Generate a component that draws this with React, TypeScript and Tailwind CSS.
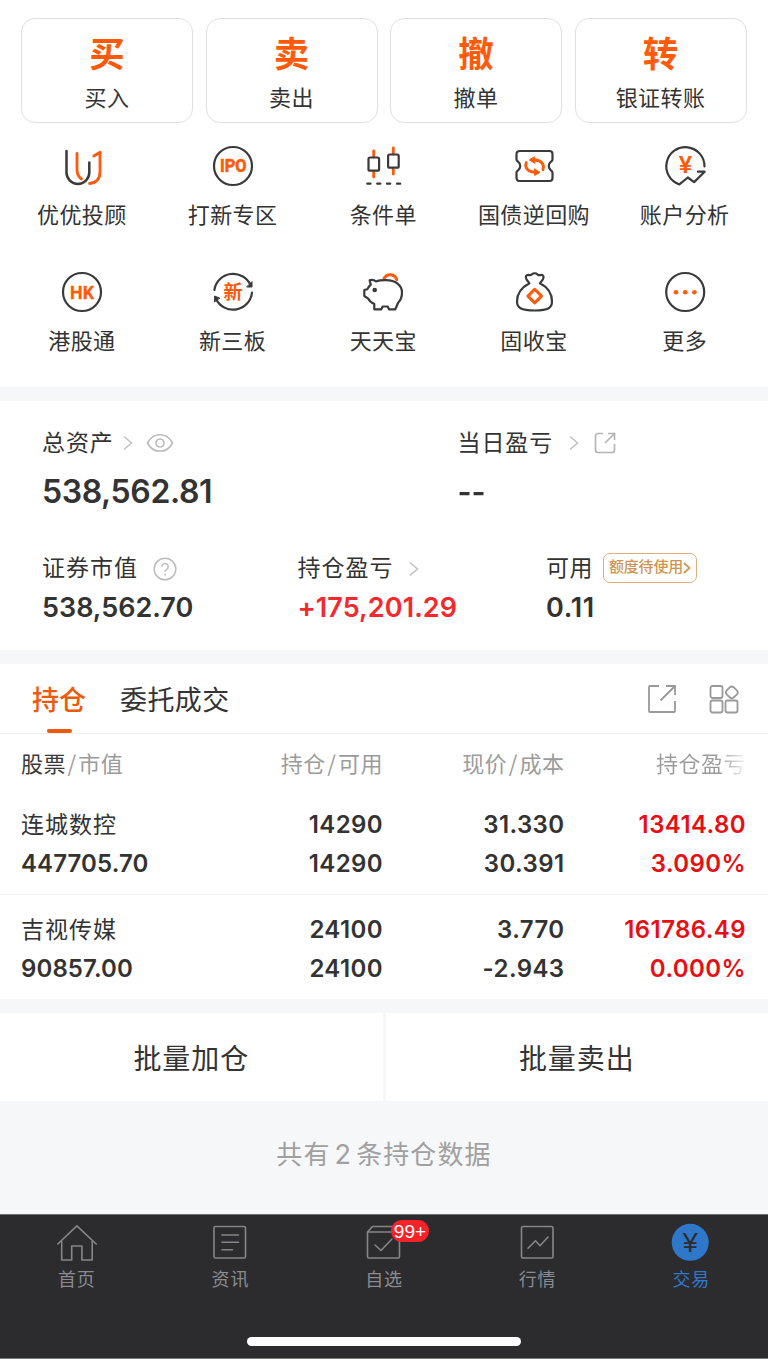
import type { ReactNode } from 'react'

const ORANGE = '#ff5a0a'
const DARK = '#3a3a3a'

const ACTIONS = [
  { mark: '买', label: '买入' },
  { mark: '卖', label: '卖出' },
  { mark: '撤', label: '撤单' },
  { mark: '转', label: '银证转账' },
]

const HOLDINGS = [
  { name: '连城数控', value: '447705.70', qty: '14290', usable: '14290', price: '31.330', cost: '30.391', pl: '13414.80', rate: '3.090%' },
  { name: '吉视传媒', value: '90857.00', qty: '24100', usable: '24100', price: '3.770', cost: '-2.943', pl: '161786.49', rate: '0.000%' },
]

function Ico({ children, color = DARK, w = 2.2 }: { children: ReactNode; color?: string; w?: number }) {
  return (
    <svg width="44" height="44" viewBox="0 0 44 44" fill="none" stroke={color} strokeWidth={w}
      strokeLinecap="round" strokeLinejoin="round" className="block shrink-0">
      {children}
    </svg>
  )
}

const SERVICES: { label: string; icon: ReactNode }[] = [
  {
    label: '优优投顾',
    icon: (
      <Ico w={2.5}>
        <path d="M17 9.5V25c0 5 1.500 8 4.500 10" stroke={ORANGE} strokeWidth="2.800" />
        <path d="M33.800 12l6.200-3.700v19.200c0 7.500-3.500 11.500-10.500 12" stroke={ORANGE} strokeWidth="2.800" />
        <path d="M6.500 7v21.500a11.400 11.400 0 0 0 22.800 0V18.500" />
      </Ico>
    ),
  },
  {
    label: '打新专区',
    icon: (
      <Ico>
        <circle cx="22" cy="22" r="19" />
        <text x="9" y="28.400" textLength="26.500" lengthAdjust="spacingAndGlyphs" fontSize="17.500" fontWeight="700"
          fill={ORANGE} stroke={ORANGE} strokeWidth="0.600" className="font-['Roboto']">IPO</text>
      </Ico>
    ),
  },
  {
    label: '条件单',
    icon: (
      <Ico>
        <path d="M12.700 7v6M12.700 28v5M32.300 4v6M32.300 25v5" stroke={ORANGE} strokeWidth="2.800" />
        <rect x="7.500" y="13.500" width="10.600" height="13.200" rx="1.500" />
        <rect x="27.100" y="10.500" width="10.600" height="13.200" rx="1.500" />
        <path d="M6.300 39.700h3.200M16.200 39.700h3.200M26 39.700h3.200M36 39.700h3.200" />
      </Ico>
    ),
  },
  {
    label: '国债逆回购',
    icon: (
      <Ico>
        <path d="M7.500 7h30a3 3 0 0 1 3 3v5.500c0 1-.5 1.500-1.500 2.200-3 2.300-3 6.300 0 8.600 1 .7 1.500 1.200 1.500 2.200V34a3 3 0 0 1-3 3h-30a3 3 0 0 1-3-3v-5.500c0-1 .5-1.500 1.500-2.200 3-2.300 3-6.300 0-8.600-1-.7-1.500-1.200-1.500-2.200V10a3 3 0 0 1 3-3z" />
        <path d="M14.300 18.500c-2 5 1.500 9.500 8 9.700M30.900 25.700c2-5-1.500-9.500-8-9.700" stroke={ORANGE} strokeWidth="2.800" />
        <path d="M22.500 25l5.500 3.300-5 3zM22.700 19.200l-5.500-3.300 5-3z" fill={ORANGE} stroke={ORANGE} strokeWidth="1" />
      </Ico>
    ),
  },
  {
    label: '账户分析',
    icon: (
      <Ico>
        <path d="M41.500 22.500A19.100 19.100 0 1 0 16.400 40.400l8.400-6.900 6.300 4.600L41.700 27.700h-6.800" />
        <text x="22.500" y="28.500" fontSize="24" fontWeight="700" textAnchor="middle" fill={ORANGE} stroke="none"
          className="font-['Liberation_Sans']">¥</text>
      </Ico>
    ),
  },
  {
    label: '港股通',
    icon: (
      <Ico>
        <circle cx="22" cy="22" r="19" />
        <text x="10" y="28.500" textLength="24" lengthAdjust="spacingAndGlyphs" fontSize="18" fontWeight="700"
          fill={ORANGE} stroke={ORANGE} strokeWidth="0.300" className="font-['Roboto']">HK</text>
      </Ico>
    ),
  },
  {
    label: '新三板',
    icon: (
      <Ico>
        <path d="M3.400 20A19 19 0 0 1 39.500 15M41 22.500A19 19 0 0 1 5 29" />
        <path d="M41 12v5h-5zM3.500 31.500V26l5 2z" fill={DARK} strokeWidth="1" />
        <text x="22" y="29" fontSize="19" fontWeight="700" textAnchor="middle" fill={ORANGE} stroke="none">新</text>
      </Ico>
    ),
  },
  {
    label: '天天宝',
    icon: (
      <Ico>
        <path d="M23 8.500a6.800 6.800 0 0 1 12.700 1.200" stroke={ORANGE} strokeWidth="3" />
        <path d="M8.600 10.200c2-.6 4.500-.3 6.400 1.200 2.500-1 6-1.200 10-1.200 9.500 0 16 5.300 16 12.300 0 4.500-1.500 8-4 10.500l-2.700 6.300H28l-1.300-2.800h-5l-1.400 2.800h-7V34c-3-1.500-5-3-6-5.300l-4-2.700v-6l3-.8c1-1.700 2-3.200 3.500-4.500z" />
        <circle cx="13.700" cy="20" r="2.300" fill={DARK} stroke="none" />
      </Ico>
    ),
  },
  {
    label: '固收宝',
    icon: (
      <Ico>
        <path d="M17.400 13.300c-1.500-2-3.500-4-3.600-6 0-2 1.700-2.900 3.500-2.200 1.200.4 1.800 0 2.700-.8 1.400-1.200 4-1.200 5.400 0 .9.800 1.500 1.200 2.700.8 1.800-.7 3.500.2 3.500 2.200-.1 2-2.100 4-3.600 6M17.400 13.300C9.500 17.500 5 24 5 31.500c0 6 3.500 9 17.700 9s17.300-3 17.300-9c0-7.500-4-14-12-18.200" />
        <path d="M22.700 19.300l6.800 6.800-6.800 6.800-6.800-6.800z" stroke={ORANGE} strokeWidth="3" />
      </Ico>
    ),
  },
  {
    label: '更多',
    icon: (
      <Ico>
        <circle cx="22.200" cy="22" r="19" />
        <g fill={ORANGE} stroke="none">
          <circle cx="13" cy="22.200" r="2.300" />
          <circle cx="22.200" cy="22.200" r="2.300" />
          <circle cx="31.400" cy="22.200" r="2.300" />
        </g>
      </Ico>
    ),
  },
]

const TABS: { label: string; icon: ReactNode; active?: boolean; badge?: string }[] = [
  {
    label: '首页',
    icon: <path d="M2.800 23L21.900 4.800 41.200 23M6.700 20.500V39h10V25h10.200v14h10.300V20.500" />,
  },
  {
    label: '资讯',
    icon: (
      <>
        <rect x="6" y="5.500" width="31.500" height="31.500" rx="1.500" />
        <path d="M14 14h16.500M14 21.300h16.500M14 28.700h10.500" />
      </>
    ),
  },
  {
    label: '自选',
    badge: '99+',
    icon: <path d="M10.500 5.500h21.500l5.500 5.500v24.500a1.500 1.500 0 0 1-1.500 1.500H7a1.500 1.500 0 0 1-1.500-1.500V11zM5.500 11h32M13 24l6 5.500 11-11.500" />,
  },
  {
    label: '行情',
    icon: (
      <>
        <rect x="5.500" y="5.500" width="31.500" height="31.500" rx="1.500" />
        <path d="M12 27.300l7.500-7.600 4.500 5 8-8.700" />
      </>
    ),
  },
  {
    label: '交易',
    active: true,
    icon: (
      <>
        <circle cx="21.200" cy="21.300" r="18.500" fill="#2f77c9" stroke="none" />
        <text x="21.200" y="30.500" fontSize="27" textAnchor="middle" fill="#2c2c2e" stroke="none" className="font-['Liberation_Sans']">¥</text>
      </>
    ),
  },
]

function Chevron() {
  return (
    <svg width="12" height="16" viewBox="0 0 12 16" fill="none" stroke="#c2c2c2" strokeWidth="1.600" className="shrink-0">
      <path d="M2 1.500L9.500 8 2 14.500" />
    </svg>
  )
}

function Band() {
  return <div className="h-[14px] bg-[#f6f7f9]" />
}

function Slash() {
  return <span className="mx-[1.500px] font-['Noto_Sans_CJK_SC']">/</span>
}

function Pair({ top, bottom, className = '' }: { top: string; bottom: string; className?: string }) {
  return (
    <div className={'text-right text-[24px] font-semibold tracking-[0.400px] leading-[39.500px] ' + className}>
      <div>{top}</div>
      <div>{bottom}</div>
    </div>
  )
}

export default function App() {
  return (
    <div className="w-[768px] h-[1359px] flex flex-col overflow-hidden whitespace-nowrap border-b border-[#77787a] bg-white text-[#333] font-['Inter','Noto_Sans_CJK_SC',sans-serif]">
      {/* trade shortcuts */}
      <section className="h-[387px] shrink-0 pt-[17.500px]">
        <div className="grid grid-cols-4 gap-[12.500px] pl-[21px] pr-[21.500px]">
          {ACTIONS.map(a => (
            <div key={a.label} className="h-[105px] rounded-[14px] border-[1.500px] border-[#e0e0e0] flex flex-col items-center">
              <div className="mt-[11px] h-[50px] leading-[50px] text-[35.500px] font-bold text-[#ff5a0a]">{a.mark}</div>
              <div className="mt-[2px] h-[32px] leading-[32px] text-[22px] tracking-[0.400px]">{a.label}</div>
            </div>
          ))}
        </div>
        <div className="mt-[21.500px] grid grid-cols-5 pl-[6.500px] pr-[8px]">
          {SERVICES.map(s => (
            <div key={s.label} className="h-[126px] flex flex-col items-center">
              {s.icon}
              <div className="mt-[10.500px] h-[32px] leading-[32px] text-[22px] tracking-[0.400px]">{s.label}</div>
            </div>
          ))}
        </div>
      </section>
      <Band />

      {/* account summary */}
      <section className="h-[249px] pt-[24px] pl-[42px]">
        <div className="flex">
          <div className="w-[415.500px]">
            <div className="flex items-center h-[36px] text-[23px] tracking-[0.900px]">
              总资产
              <span className="ml-[8.500px]"><Chevron /></span>
              <svg width="28" height="20" viewBox="0 0 28 20" fill="none" stroke="#bdbdbd" strokeWidth="1.700" className="ml-[11.500px]">
                <path d="M1.500 10C7-1 21-1 26.500 10 21 21 7 21 1.500 10z" />
                <circle cx="14" cy="10" r="4" />
              </svg>
            </div>
            <div className="mt-[10px] h-[42px] leading-[42px] text-[32px] font-semibold tracking-[-0.400px]">538,562.81</div>
          </div>
          <div>
            <div className="flex items-center h-[36px] text-[23px] tracking-[0.900px]">
              当日盈亏
              <span className="ml-[15px]"><Chevron /></span>
              <svg width="22" height="22" viewBox="0 0 22 22" fill="none" stroke="#b5b5b5" strokeWidth="1.700" className="ml-[14px]">
                <path d="M9 1.500H4A2.500 2.500 0 0 0 1.500 4v14A2.500 2.500 0 0 0 4 20.500h14a2.500 2.500 0 0 0 2.500-2.500v-6M14 1.500h6.500V8M20.500 1.500L11 11" />
              </svg>
            </div>
            <div className="mt-[10px] h-[42px] leading-[42px] text-[30px] font-semibold">--</div>
          </div>
        </div>
        <div className="mt-[37px] flex">
          <div className="w-[255.500px]">
            <div className="flex items-center h-[37px] text-[23px] tracking-[1px]">
              证券市值
              <svg width="24" height="24" viewBox="0 0 24 24" fill="none" stroke="#bdbdbd" strokeWidth="1.500" className="ml-[15px]">
                <circle cx="12" cy="12" r="10.800" />
                <path d="M8.800 9.800a3.200 3.200 0 1 1 5 2.600c-1.200.8-1.800 1.300-1.800 2.600M12 16.600v1.800" />
              </svg>
            </div>
            <div className="mt-[1px] h-[40px] leading-[40px] text-[27px] font-semibold">538,562.70</div>
          </div>
          <div className="w-[248.500px]">
            <div className="flex items-center h-[37px] text-[23px] tracking-[1px]">
              持仓盈亏
              <span className="ml-[14px]"><Chevron /></span>
            </div>
            <div className="mt-[1px] h-[40px] leading-[40px] text-[27px] font-semibold tracking-[0.100px] text-[#f5282d]">+175,201.29</div>
          </div>
          <div>
            <div className="flex items-center h-[37px] text-[23px] tracking-[0.500px]">
              可用
              <span className="mt-[-2px] ml-[10px] w-[94px] h-[30px] rounded-[7px] border-[1.500px] border-[#dfae7c] flex items-center justify-center text-[15px] font-medium tracking-[-0.200px] text-[#cf9550]">
                额度待使用
                <svg width="8" height="12" viewBox="0 0 8 12" fill="none" stroke="#cf9550" strokeWidth="1.700"><path d="M1 1l5.500 5L1 11" /></svg>
              </span>
            </div>
            <div className="mt-[1px] h-[40px] leading-[40px] text-[27px] font-semibold tracking-[0.700px]">0.11</div>
          </div>
        </div>
      </section>
      <Band />

      {/* holdings */}
      <section className="h-[335px]">
        <div className="h-[70px] border-b border-[#f0f0f0] flex pl-[32px] pr-[29px]">
          <div className="flex flex-col items-center">
            <div className="h-[65px] leading-[73px] text-[27px] font-medium text-[#ee5a0c]">持仓</div>
            <div className="w-[25px] h-[5px] rounded-full bg-[#ee5a0c]" />
          </div>
          <div className="ml-[34px] leading-[73px] text-[27px] tracking-[0.400px]">委托成交</div>
          <div className="ml-auto h-[70px] flex items-center gap-[32px]">
            <svg width="30" height="30" viewBox="0 0 30 30" fill="none" stroke="#999" strokeWidth="1.800">
              <path d="M12 2H3a1 1 0 0 0-1 1v24a1 1 0 0 0 1 1h24a1 1 0 0 0 1-1V17M19 2h9v9M28 2L13.500 16.500" />
            </svg>
            <svg width="30" height="30" viewBox="0 0 30 30" fill="none" stroke="#999" strokeWidth="1.800" strokeLinejoin="round">
              <rect x="1.500" y="2" width="12" height="12" rx="2" />
              <rect x="1.500" y="16.500" width="12" height="12" rx="2" />
              <rect x="16.500" y="16.500" width="12" height="12" rx="2" />
              <path d="M21 3.200q1.800-1.500 3.600 0l3.400 3.500q1.500 1.800 0 3.600l-3.400 3.200q-1.800 1.500-3.600 0l-3.400-3.200q-1.500-1.800 0-3.600z" />
            </svg>
          </div>
        </div>
        <div className="h-[56px] grid grid-cols-[181px_181px_181.500px_181.500px] pl-[21px] leading-[56px] text-[22px] tracking-[0.500px] text-[#9b9b9b] font-['Noto_Sans_CJK_SC']">
          <div><span className="text-[#3a3a3a]">股票</span><Slash />市值</div>
          <div className="text-right">持仓<Slash />可用</div>
          <div className="text-right">现价<Slash />成本</div>
          <div className="text-right">
            <span className="bg-linear-to-r from-[#9b9b9b] from-70% to-[#9b9b9b]/10 bg-clip-text text-transparent">持仓盈亏</span>
          </div>
        </div>
        {HOLDINGS.map((h, i) => (
          <div key={h.name}
            className={'h-[105px] pt-[14.500px] pl-[21px] grid grid-cols-[181px_181px_181.500px_181.500px] ' + (i ? '' : 'border-b border-[#f0f0f0]')}>
            <div className="leading-[39.500px]">
              <div className="relative top-[1px] text-[23px] tracking-[1px]">{h.name}</div>
              <div className="text-[24px] font-semibold tracking-[0.100px]">{h.value}</div>
            </div>
            <Pair top={h.qty} bottom={h.usable} />
            <Pair top={h.price} bottom={h.cost} />
            <Pair top={h.pl} bottom={h.rate} className="text-[#e80f14]" />
          </div>
        ))}
      </section>
      <Band />

      {/* batch buttons */}
      <section className="h-[88px] flex gap-[3px] bg-[#f6f7f9] leading-[92px] text-center text-[28px] tracking-[0.900px]">
        <div className="w-[382.500px] bg-white">批量加仓</div>
        <div className="flex-1 bg-white">批量卖出</div>
      </section>
      <div className="h-[113px] bg-[#f6f7f9] leading-[107px] text-center text-[26px] tracking-[1.100px] text-[#a0a0a0]">
        共有<span className="mx-[4px] text-[27px]">2</span>条持仓数据
      </div>

      {/* bottom tab bar */}
      <nav className="h-[144px] border-t border-[#6f7072] bg-[#2c2c2e]">
        <div className="grid grid-cols-5 pt-[6px]">
          {TABS.map(t => (
            <div key={t.label} className={'flex flex-col items-center ' + (t.active ? 'text-[#2f77c9]' : 'text-[#8a8a90]')}>
              <div className="relative">
                <Ico color="#85858b" w={1.600}>{t.icon}</Ico>
                {t.badge && (
                  <span className="absolute left-[29px] top-[-1px] w-[38px] h-[22px] rounded-full bg-[#f5222a] text-center leading-[23px] text-[19px] text-white font-['Liberation_Sans']">{t.badge}</span>
                )}
              </div>
              <div className="mt-[1px] h-[28px] leading-[28px] text-[18px] tracking-[0.800px]">{t.label}</div>
            </div>
          ))}
        </div>
        <div className="mt-[43px] mx-auto w-[274px] h-[9px] rounded-full bg-white" />
      </nav>
    </div>
  )
}
